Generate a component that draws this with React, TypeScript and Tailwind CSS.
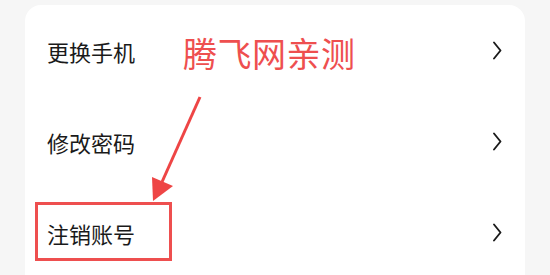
import React from 'react';

const items = ['更换手机', '修改密码', '注销账号'];

const Chevron = () => (
  <svg width="10" height="19" viewBox="0 0 10 19" fill="none">
    <path d="M2 1.5L8.5 9.5L2 17.5" stroke="#1a1a1a" strokeWidth="1.9" strokeLinecap="round" strokeLinejoin="round" />
  </svg>
);

const App: React.FC = () => {
  return (
    <div
      className="relative w-[550px] h-[275px] overflow-hidden bg-[#f6f6f6] pt-[5px] pl-[25px]"
      style={{ fontFamily: '"Noto Sans CJK SC", "Noto Sans", sans-serif' }}
    >
      <div className="w-[500px] h-[290px] rounded-2xl bg-white">
        {items.map((label) => (
          <div key={label} className="h-[91px] flex items-center justify-between pl-[22px] pr-[23px]">
            <span className="text-[22px] leading-none text-[#1a1a1a]">{label}</span>
            <Chevron />
          </div>
        ))}
      </div>

      {/* annotation overlay */}
      <span className="absolute left-[183px] top-[33px] text-[34px] leading-[40px] tracking-[0.5px] text-[#ee4f4f]">
        腾飞网亲测
      </span>
      <div className="absolute left-[35px] top-[202px] w-[137px] h-[59px] border-[3px] border-[#ee4f4f]" />
      <svg className="absolute left-0 top-0" width="550" height="275" viewBox="0 0 550 275">
        <line x1="200" y1="97" x2="162" y2="182" stroke="#ee4545" strokeWidth="3" />
        <polygon points="152,177 173,186 153,201" fill="#ee4545" />
      </svg>
    </div>
  );
};

export default App;
